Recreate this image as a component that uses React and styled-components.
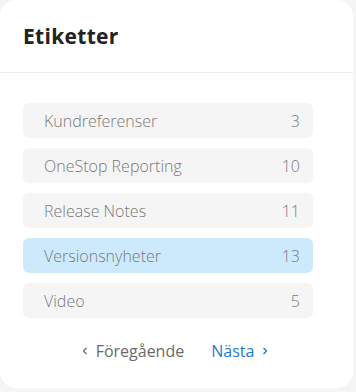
import React from "react";
import styled, { createGlobalStyle } from "styled-components";

const GlobalStyle = createGlobalStyle`
  html, body {
    margin: 0;
    padding: 0;
    background: #f5f5f5;
  }
  body {
    font-family: "Open Sans", "Liberation Sans", sans-serif;
  }
`;

const Card = styled.div`
  width: 353px;
  height: 388px;
  background: #ffffff;
  border-radius: 16px;
  box-sizing: border-box;
  display: flex;
  flex-direction: column;
`;

const Header = styled.div`
  height: 73px;
  box-sizing: border-box;
  border-bottom: 1px solid #ebebeb;
  padding: 0 23px;
  display: flex;
  align-items: center;
`;

const Title = styled.h2`
  margin: 0;
  font-size: 21px;
  font-weight: 700;
  color: #222222;
  letter-spacing: 0.3px;
`;

const Body = styled.div`
  padding: 30px 40px 0 23px;
  display: flex;
  flex-direction: column;
  gap: 10px;
`;

const TagRow = styled.a`
  height: 35px;
  box-sizing: border-box;
  border-radius: 6px;
  padding: 0 13px 0 21px;
  display: flex;
  align-items: center;
  justify-content: space-between;
  background: ${(p) => (p.$active ? "#cde9fc" : "#f5f5f5")};
  color: #7a7a7a;
  font-size: 16px;
  font-weight: 300;
  text-decoration: none;
  cursor: pointer;
`;

const Pager = styled.div`
  display: flex;
  justify-content: center;
  gap: 27px;
  margin-top: 12px;
  padding-left: 14px;
`;

const PageLink = styled.a`
  display: flex;
  align-items: center;
  gap: 7px;
  font-size: 16px;
  font-weight: 400;
  color: ${(p) => (p.$primary ? "#1b7bd1" : "#6a6a6a")};
  text-decoration: none;
  cursor: pointer;
`;

const Chevron = ({ dir }) => (
  <svg width="8" height="10" viewBox="0 0 8 10" fill="none">
    <path
      d={dir === "left" ? "M5.5 2L2.5 5l3 3" : "M2.5 2l3 3-3 3"}
      stroke="currentColor"
      strokeWidth="1.3"
    />
  </svg>
);

const tags = [
  { name: "Kundreferenser", count: 3 },
  { name: "OneStop Reporting", count: 10 },
  { name: "Release Notes", count: 11 },
  { name: "Versionsnyheter", count: 13, active: true },
  { name: "Video", count: 5 },
];

export default function App() {
  return (
    <>
      <GlobalStyle />
      <Card>
        <Header>
          <Title>Etiketter</Title>
        </Header>
        <Body>
          {tags.map((t) => (
            <TagRow key={t.name} $active={t.active}>
              <span>{t.name}</span>
              <span>{t.count}</span>
            </TagRow>
          ))}
          <Pager>
            <PageLink>
              <Chevron dir="left" />
              Föregående
            </PageLink>
            <PageLink $primary>
              Nästa
              <Chevron dir="right" />
            </PageLink>
          </Pager>
        </Body>
      </Card>
    </>
  );
}
